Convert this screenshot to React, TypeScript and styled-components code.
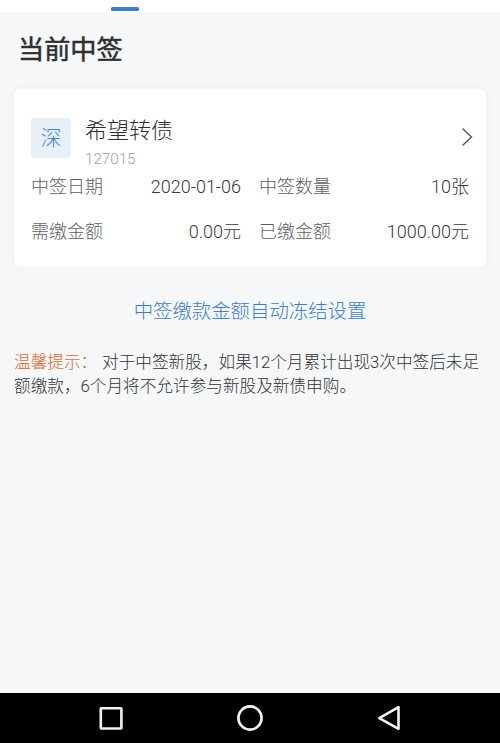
import React from 'react';
import styled, { createGlobalStyle } from 'styled-components';

const GlobalStyle = createGlobalStyle`
  * { box-sizing: border-box; }
  body {
    margin: 0;
    background: #f5f7f9;
    font-family: Roboto, 'Noto Sans CJK SC', sans-serif;
    font-weight: 300;
    color: #333;
  }
`;

const Screen = styled.div`
  display: flex;
  flex-direction: column;
  width: 500px;
  height: 743px;
  overflow: hidden;
  background: #f5f7f9;
`;

const TabStrip = styled.div`
  flex: none;
  height: 12px;
  padding: 7px 0 0 111px;
  background: #fff;
`;

const TabIndicator = styled.div`
  width: 28px;
  height: 4px;
  border-radius: 1.5px;
  background: #3a7bd0;
`;

const Content = styled.main`
  flex: 1;
  padding: 0 14px;
`;

const Title = styled.h1`
  margin: 0;
  padding: 20px 0 0 4px;
  height: 77px;
  font-size: 26.2px;
  line-height: 36px;
  font-weight: 400;
  -webkit-text-stroke: 0.5px #2e2f31;
  color: #2e2f31;
`;

const Card = styled.section`
  height: 178px;
  padding: 26px 17px 0;
  border-radius: 6px;
  background: #fff;
  box-shadow: 0 0 8px rgba(60, 70, 90, 0.05);
`;

const CardHeader = styled.div`
  display: flex;
  align-items: flex-start;
  height: 60px;
`;

const MarketBadge = styled.div`
  width: 40px;
  height: 40px;
  margin: 3px 14px 0 0;
  border-radius: 3px;
  background: #e8f1fa;
  color: #4285d2;
  font-size: 21px;
  line-height: 40px;
  text-align: center;
`;

const Security = styled.div`
  flex: 1;
`;

const Name = styled.div`
  font-size: 22px;
  line-height: 31px;
  color: #2c2c2c;
`;

const Code = styled.div`
  margin-top: 3px;
  font-size: 15.2px;
  line-height: 20px;
  color: #a0a0a0;
`;

const Chevron = styled.svg`
  width: 12px;
  height: 20px;
  margin: 12px -4px 0 0;
`;

const Details = styled.dl`
  display: grid;
  grid-template-columns: 210px 210px;
  column-gap: 18px;
  row-gap: 21px;
  margin: 0;
`;

const Detail = styled.div`
  display: flex;
  justify-content: space-between;
  font-size: 18px;
  line-height: 24px;
  white-space: nowrap;
`;

const Label = styled.dt`
  color: #606060;
`;

const Value = styled.dd`
  margin: 0;
  color: #383838;
`;

const SettingsLink = styled.a`
  display: block;
  margin-top: 30px;
  font-size: 19.4px;
  line-height: 30px;
  text-align: center;
  color: #3a80ca;
`;

const Hint = styled.p`
  margin: 24px 0 0;
  font-size: 16.65px;
  line-height: 24px;
  white-space: nowrap;
  color: #333;
`;

const HintLabel = styled.span`
  display: inline-block;
  width: 88px;
  color: #d9682c;
`;

const NavBar = styled.nav`
  display: flex;
  flex: none;
  align-items: center;
  justify-content: space-between;
  height: 50px;
  padding: 0 97px;
  background: #000;
`;

const NavIcon = styled.svg`
  width: 28px;
  height: 28px;
  fill: none;
  stroke: #f2f2f2;
  stroke-width: 2.6;
  stroke-linejoin: round;
`;

const details = [
  ['中签日期', '2020-01-06'],
  ['中签数量', '10张'],
  ['需缴金额', '0.00元'],
  ['已缴金额', '1000.00元'],
];

export default function App() {
  return (
    <>
      <GlobalStyle />
      <Screen>
        <TabStrip>
          <TabIndicator />
        </TabStrip>
        <Content>
          <Title>当前中签</Title>
          <Card>
            <CardHeader>
              <MarketBadge>深</MarketBadge>
              <Security>
                <Name>希望转债</Name>
                <Code>127015</Code>
              </Security>
              <Chevron viewBox="0 0 12 20" fill="none" stroke="#555" strokeWidth="1.4">
                <path d="M1.5 1.5 L10.5 10 L1.5 18.5" />
              </Chevron>
            </CardHeader>
            <Details>
              {details.map(([label, value]) => (
                <Detail key={label}>
                  <Label>{label}</Label>
                  <Value>{value}</Value>
                </Detail>
              ))}
            </Details>
          </Card>
          <SettingsLink>中签缴款金额自动冻结设置</SettingsLink>
          <Hint>
            <HintLabel>温馨提示：</HintLabel>
            对于中签新股，如果12个月累计出现3次中签后未足
            <br />
            额缴款，6个月将不允许参与新股及新债申购。
          </Hint>
        </Content>
        <NavBar>
          <NavIcon viewBox="0 0 28 28">
            <rect x="3.8" y="4.3" width="20.6" height="20.2" rx="0.5" />
          </NavIcon>
          <NavIcon viewBox="0 0 28 28">
            <circle cx="14" cy="14" r="11.6" />
          </NavIcon>
          <NavIcon viewBox="0 0 28 28">
            <path d="M23.5 3.2 V24.8 L4.3 14.2 Z" />
          </NavIcon>
        </NavBar>
      </Screen>
    </>
  );
}
